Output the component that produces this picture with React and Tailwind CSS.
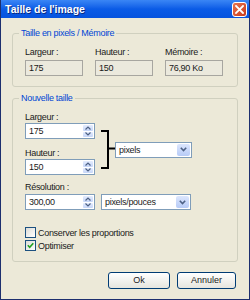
import { useState } from "react";

const FONT = { fontFamily: '"Liberation Sans", Arial, sans-serif' };

export default function App() {
  const [keep, setKeep] = useState(false);
  const [optim, setOptim] = useState(true);

  return (
    <div
      className="w-[250px] h-[300px] flex flex-col bg-[#ece9d8] border-x border-b border-[#1d2f6e] text-[9px] tracking-[-0.3px] text-[#1a1a1a] overflow-hidden"
      style={FONT}
    >
      {/* title bar */}
      <div className="h-[18px] shrink-0 flex items-center justify-between pl-[4px] pr-[2px] bg-gradient-to-b from-[#3a86f5] via-[#0a5be6] to-[#0653de]">
        <span className="text-white font-bold text-[10.5px] leading-none tracking-normal [text-shadow:1px_1px_0_#0a2a80]">
          Taille de l'image
        </span>
        <button className="w-[15px] h-[15px] rounded-[3px] border border-white bg-gradient-to-br from-[#e8734f] to-[#c8391a] flex items-center justify-center">
          <svg width="9" height="9" viewBox="0 0 9 9">
            <path d="M1 1L8 8M8 1L1 8" stroke="white" strokeWidth="1.8" strokeLinecap="square" />
          </svg>
        </button>
      </div>

      <div className="flex-1 flex flex-col px-[11px]">
        {/* group 1 */}
        <Group title="Taille en pixels / Mémoire" className="mt-[15px] pt-[12px] pb-[10px] pl-[12px]">
          <div className="flex gap-[12px]">
            <ReadOnly label="Largeur :" value="175" />
            <ReadOnly label="Hauteur :" value="150" />
            <ReadOnly label="Mémoire :" value="76,90 Ko" />
          </div>
        </Group>

        {/* group 2 */}
        <Group title="Nouvelle taille" className="mt-[11px] pt-[12px] pb-[9px] pl-[12px]">
          <div className="flex">
            <div className="flex flex-col w-[70px]">
              <Label>Largeur :</Label>
              <Spin value="175" />
              <Label className="mt-[8px]">Hauteur :</Label>
              <Spin value="150" />
            </div>
            <div className="flex items-center ml-[6px] mt-[19px] self-start">
              <svg width="14" height="39" viewBox="0 0 14 39">
                <path d="M0 1H7V38H0M7 18.5H14" fill="none" stroke="black" strokeWidth="2" />
              </svg>
              <Dropdown value="pixels" className="w-[77px]" />
            </div>
          </div>
          <Label className="mt-[6px]">Résolution :</Label>
          <div className="flex gap-[6px] mt-[1px]">
            <Spin value="300,00" />
            <Dropdown value="pixels/pouces" className="w-[90px]" />
          </div>
          <Check className="mt-[16px]" checked={keep} onChange={() => setKeep(!keep)} label="Conserver les proportions" />
          <Check checked={optim} onChange={() => setOptim(!optim)} label="Optimiser" />
        </Group>

        <div className="flex justify-end gap-[7px] mt-[10px] pr-[2px]">
          <XpButton className="w-[62px]">Ok</XpButton>
          <XpButton className="w-[59px]">Annuler</XpButton>
        </div>
      </div>
    </div>
  );
}

function Group({ title, className = "", children }) {
  return (
    <div className={`relative border border-[#d0d0bf] rounded-[3px] flex flex-col ${className}`}>
      <span className="absolute left-[6px] -top-[7px] px-[2px] bg-[#ece9d8] text-[#0046d5] leading-[12px]">
        {title}
      </span>
      {children}
    </div>
  );
}

function Label({ children, className = "" }) {
  return <div className={`h-[12px] leading-[12px] ${className}`}>{children}</div>;
}

function ReadOnly({ label, value }) {
  return (
    <div className="flex flex-col w-[58px]">
      <Label>{label}</Label>
      <div className="mt-[2px] h-[16px] border border-[#a7a6a0] bg-[#ebe9dd] px-[3px] leading-[14px]">
        {value}
      </div>
    </div>
  );
}

function Spin({ value }) {
  return (
    <div className="w-[70px] h-[16px] border border-[#7f9db9] bg-white flex items-stretch">
      <span className="flex-1 px-[3px] leading-[14px]">{value}</span>
      <div className="w-[10px] flex flex-col gap-px py-px mr-px">
        <SpinBtn up />
        <SpinBtn />
      </div>
    </div>
  );
}

function SpinBtn({ up }) {
  return (
    <div className="flex-1 rounded-[1px] bg-gradient-to-b from-[#e4ecfd] to-[#c6d6f8] flex items-center justify-center">
      <svg width="6" height="4" viewBox="0 0 6 4">
        <path d={up ? "M0.5 3.5L3 1L5.5 3.5" : "M0.5 0.5L3 3L5.5 0.5"} fill="none" stroke="#4d6185" strokeWidth="1.2" />
      </svg>
    </div>
  );
}

function Dropdown({ value, className = "" }) {
  return (
    <div className={`h-[16px] border border-[#7f9db9] bg-white flex items-stretch ${className}`}>
      <span className="flex-1 px-[3px] leading-[14px]">{value}</span>
      <div className="w-[13px] m-px rounded-[2px] bg-gradient-to-b from-[#dce6fd] to-[#b7cbf7] flex items-center justify-center">
        <svg width="7" height="5" viewBox="0 0 7 5">
          <path d="M0.8 0.8L3.5 3.5L6.2 0.8" fill="none" stroke="#4d6185" strokeWidth="1.6" />
        </svg>
      </div>
    </div>
  );
}

function Check({ checked, onChange, label, className = "" }) {
  return (
    <div className={`h-[13px] flex items-center gap-[2px] cursor-default ${className}`} onClick={onChange}>
      <div className="w-[11px] h-[11px] border border-[#1c5180] bg-gradient-to-br from-[#dcdcd7] to-white flex items-center justify-center">
        {checked && (
          <svg width="7" height="7" viewBox="0 0 7 7">
            <path d="M0.8 3.3L2.7 5.3L6.3 1.2" fill="none" stroke="#21a121" strokeWidth="1.6" />
          </svg>
        )}
      </div>
      <span className="leading-[12px]">{label}</span>
    </div>
  );
}

function XpButton({ children, className = "" }) {
  return (
    <button
      className={`h-[17px] rounded-[3px] border border-[#003c74] bg-gradient-to-b from-white to-[#e6e5de] text-[9px] leading-none tracking-normal ${className}`}
    >
      {children}
    </button>
  );
}
